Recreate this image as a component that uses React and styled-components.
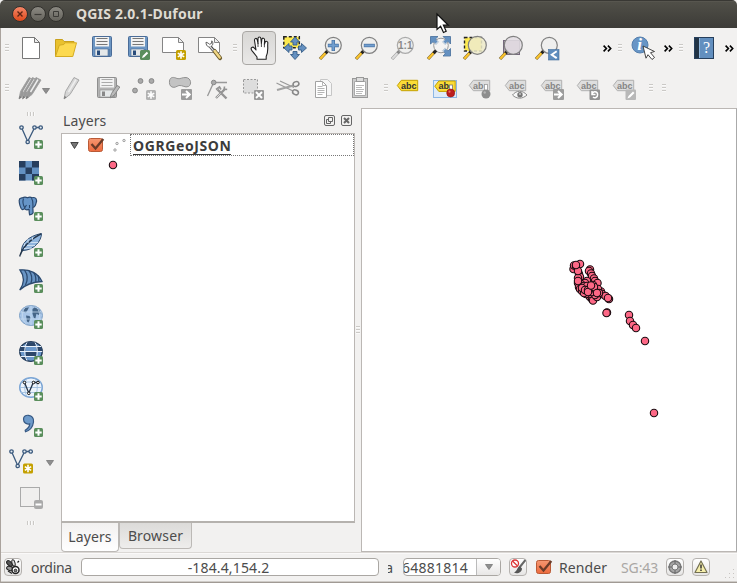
import React from "react";
import styled, { createGlobalStyle, css } from "styled-components";

const GlobalStyle = createGlobalStyle`
  html, body { margin: 0; padding: 0; background: #f2f1f0; }
  * { box-sizing: border-box; }
`;

const Window = styled.div`
  width: 737px;
  height: 583px;
  display: flex;
  flex-direction: column;
  overflow: hidden;
  background: #f2f1f0;
  color: #4c4c4c;
  font: 14px "Noto Sans", sans-serif;
`;

/* ---------- title bar ---------- */
const TitleBar = styled.header`
  position: relative;
  height: 28px;
  flex: none;
  display: flex;
  align-items: center;
  padding-left: 12px;
  border-radius: 5px 5px 0 0;
  background: linear-gradient(#393834 0, #393834 1px, #5f5d56 1px, #504f48 2px, #3c3b37 100%);
`;
const WindowButton = styled.button`
  width: 16px;
  height: 16px;
  margin-right: 2px;
  padding: 0;
  border: 1px solid #32312d;
  border-radius: 50%;
  display: grid;
  place-items: center;
  background: ${(p) => (p.$close ? "linear-gradient(#f58667, #e04a1c)" : "linear-gradient(#8b8982, #65635c)")};
`;
const Title = styled.h1`
  margin: 0 0 0 10px;
  color: #dfdbd2;
  font: bold 14px/28px "Noto Sans", sans-serif;
  letter-spacing: 0.2px;
  white-space: pre;
`;
const Pointer = styled.svg`
  position: absolute;
  left: 436px;
  top: 13px;
  z-index: 2;
  overflow: visible;
`;

/* ---------- shared ---------- */
const Frame = styled.div`
  flex: 1;
  min-height: 0;
  display: flex;
  flex-direction: column;
  border-left: 1px solid #aaa39d;
  border-bottom: 1px solid #a09a94;
  box-shadow: inset 0 -1px #cfccc8;
`;
const IconSvg = styled.svg`
  width: 24px;
  height: 24px;
  flex: none;
  display: block;
  overflow: visible;
`;
const Icon = ({ children }) => (
  <IconSvg viewBox="0 0 24 24" fill="none">{children}</IconSvg>
);

const ToolRow = styled.div`
  height: 40px;
  flex: none;
  display: flex;
  align-items: center;
  margin-left: -1px;
`;
const Cell = styled.div`
  width: ${(p) => p.$w || 36}px;
  height: 36px;
  flex: none;
  display: flex;
  align-items: center;
  justify-content: center;
  ${(p) => p.$start && css`
    justify-content: flex-start;
    padding-left: ${p.$start}px;
    & > svg:last-child { margin-top: 6px; }
  `}
`;
const ActiveTool = styled.div`
  width: 34px;
  height: 34px;
  margin: 0 1px;
  display: grid;
  place-items: center;
  border: 1px solid #aaa8a5;
  border-radius: 4px;
  background: linear-gradient(#d8d7d5, #e9e8e7);
`;
const GripLines = styled.div`
  width: ${(p) => (p.$vertical ? 8 : 4)}px;
  height: ${(p) => (p.$vertical ? 4 : 8)}px;
  background: repeating-linear-gradient(${(p) => (p.$vertical ? "90deg" : "180deg")}, #cbc9c6 0 1px, #fafafa 1px 2px, transparent 2px 3px);
`;
const Grip = ({ w }) => <Cell $w={w}><GripLines /></Cell>;
const Gap = styled.div`
  width: ${(p) => p.$w}px;
  flex: none;
`;
const Chevron = () => (
  <svg width="9" height="7" viewBox="0 0 9 7" fill="none" stroke="#000" strokeWidth="1.6">
    <path d="M.6.6 3.4 3.5.6 6.4M4.9.6 7.7 3.5 4.9 6.4" />
  </svg>
);
const DownArrow = () => (
  <svg width="8" height="6" viewBox="0 0 8 6"><path d="M.5.5h7L4 5.5z" fill="#8f8f8f" stroke="#777" strokeWidth=".8" /></svg>
);

/* ---------- badges ---------- */
const PlusBadge = () => (
  <g>
    <rect x="15" y="15" width="9" height="9" rx="1.5" fill="#5a8e5c" />
    <path d="M19.5 16.3v6.4M16.3 19.5h6.4" stroke="#fff" strokeWidth="2" />
  </g>
);
const StarBadge = ({ color = "#c4a000" }) => (
  <g>
    <rect x="14" y="14" width="10" height="10" rx="1.5" fill={color} />
    <path d="M19 15.3v7.4M15.8 17.1l6.4 3.8M22.2 17.1l-6.4 3.8" stroke="#fff" strokeWidth="1.6" />
  </g>
);
const ArrowBadge = () => (
  <g>
    <rect x="13" y="13" width="11" height="11" rx="1" fill="#9c9c9c" />
    <path d="M14 18.5h7M18 15l3.7 3.5L18 22" stroke="#fff" strokeWidth="2" />
  </g>
);

/* ---------- icons: file ---------- */
const NewFile = () => (
  <Icon>
    <path d="M3.5 1.5h12l5 5v16h-17z" fill="#fff" stroke="#777" />
    <path d="M15.5 1.5v5h5z" fill="#eee" stroke="#777" />
  </Icon>
);
const OpenFile = () => (
  <Icon>
    <path d="M1.5 20.5v-17h7l1.5 2h10v3" fill="#e9c12e" stroke="#c9a11d" />
    <path d="M1.5 20.5 5.3 9.2l4.5-.7 1-1.7h11.7l-3.7 13.7z" fill="#fcd94f" stroke="#d5ac22" />
  </Icon>
);
const Floppy = ({ gray }) => {
  const edge = gray ? "#8f8f8f" : "#4a6c98";
  const body = gray ? "#b3b3b3" : "#6d97c4";
  return (
    <g>
      <rect x="2.5" y=".5" width="19" height="20" rx="1" fill={body} stroke={edge} />
      <rect x="5" y="1" width="14" height="9.5" fill="#f2f2f2" />
      <path d="M6.5 2.5h11M6.5 5.5h11M6.5 8.5h11" stroke={gray ? "#aaa" : "#777"} />
      <rect x="5" y="13" width="13" height="7" fill="#e5e8e9" stroke={edge} strokeWidth=".6" />
      <rect x="7" y="14.5" width="3" height="4.5" fill={gray ? "#888" : "#294c7b"} />
      <path d="M18.3 13h2v7h-2z" fill={edge} opacity=".6" />
    </g>
  );
};
const Save = () => <Icon><Floppy /></Icon>;
const SaveAs = () => (
  <Icon>
    <Floppy />
    <rect x="14" y="14" width="10" height="10" rx="1.5" fill="#5a8e5c" />
    <path d="m16 22 .8-2.2 4-4 1.4 1.4-4 4z" fill="#fff" />
  </Icon>
);
const Sheet = () => (
  <g>
    <path d="M.5 1.5h16l5 5v10H.5z" fill="#fff" stroke="#858585" />
    <path d="M16.5 1.5v5h5z" fill="#eee" stroke="#858585" />
  </g>
);
const NewComposer = () => <Icon><Sheet /><StarBadge /></Icon>;
const ComposerManager = () => (
  <Icon>
    <Sheet />
    <path d="m16.5 15 5.500 7" stroke="#6d5b2a" strokeWidth="4.2" strokeLinecap="round" />
    <path d="m16.7 15 5 6.500" stroke="#f0d684" strokeWidth="2.5" strokeLinecap="round" />
    <path d="m11.5 9.5 4 5" stroke="#444" strokeWidth="3" />
    <path d="M8 6.200c0 5 4 6 6.300 3.100 1-1.500.7-3.300-.5-4.500l-.4 2.700-2 .8-1.200-1.200z" fill="#fff" stroke="#555" strokeWidth=".9" />
    <path d="m11.5 10 4 4.700" stroke="#ddd" strokeWidth="1.2" />
  </Icon>
);

/* ---------- icons: navigation ---------- */
const Hand = () => (
  <Icon>
    <path d="M10 23.300v-2.300L4.700 14.300C3 11.500 5.800 10.200 7.400 12.200L9 14 7.500 4.500C7.300 2 9.700 1.800 10.200 3.700L11 7.500V2.700C11 .5 13.700.5 13.900 2.700L14.400 7.500l.4-4c.3-2 2.900-1.600 2.800.4l-.2 4.300.7-1.900c.8-1.700 3-1 2.700.9-.5 4.200 1 8-1.600 13.300v2.800z" fill="#fff" stroke="#222" strokeWidth="1.1" strokeLinejoin="round" />
    <path d="M11 7v4M14.400 7v4M17.400 7.800v3.500" stroke="#333" strokeWidth=".9" />
  </Icon>
);
const PanSelection = () => (
  <Icon>
    <rect x=".8" y=".8" width="15.5" height="11" fill="#fce94f" stroke="#222" strokeWidth="1.5" strokeDasharray="3 2" />
    <g fill="#6490c0" stroke="#375d88" strokeWidth=".9">
      <path d="m12 1 4.500 5H14v3h-4V6H7.500z" />
      <path d="M12 23.500 7.500 18.500H10v-3h4v3h2.500z" />
      <path d="m1 12 5-4.500V10h3v4H6v2.500z" />
      <path d="m23.500 12-5 4.500V14h-3v-4h3V7.500z" />
    </g>
  </Icon>
);
const Handle = ({ gray }) => (
  <g>
    <path d="m1 23 7-7.500" stroke={gray ? "#999" : "#7d6526"} strokeWidth="3.2" />
    <path d="m1.300 22.700 6-6.400" stroke={gray ? "#ddd" : "#fcc52d"} strokeWidth="2.1" />
    <path d="m6.500 17.200 2.600-2.800" stroke={gray ? "#888" : "#222"} strokeWidth="3" />
  </g>
);
const Lens = ({ r = 8, gray, fill = "#efefee", children }) => (
  <g>
    <Handle gray={gray} />
    <circle cx="14.3" cy="9.3" r={r} fill={fill} stroke={gray ? "#aaa" : "#808080"} strokeWidth="1.2" />
    {children}
  </g>
);
const ZoomIn = () => <Icon><Lens><path d="M14.300 4v11M8.800 9.500h11" stroke="#456fa0" strokeWidth="3.4" /><path d="M14.300 4.500v10M9.300 9.500h10" stroke="#729fcf" strokeWidth="2" /></Lens></Icon>;
const ZoomOut = () => <Icon><Lens><path d="M8.800 9.500h11" stroke="#456fa0" strokeWidth="3.4" /><path d="M9.300 9.500h10" stroke="#729fcf" strokeWidth="2" /></Lens></Icon>;
const ZoomNative = () => (
  <Icon>
    <Lens gray><text x="14.3" y="13" textAnchor="middle" fontFamily="Liberation Sans, sans-serif" fontWeight="bold" fontSize="10" fill="#888">1:1</text></Lens>
  </Icon>
);
const ZoomFull = () => (
  <Icon>
    <g fill="#6490c0" stroke="#456d9b" strokeWidth=".8">
      <path d="M3.500.5h7.500L8.700 2.800l3 3L9 8.700l-3-3L3.500 8z" />
      <path d="M23.500.5V8l-2.300-2.300-3 3-2.800-2.800 3-3L16.100.5z" />
      <path d="M23.500 20H16l2.300-2.300-3-3 2.800-2.800 3 3 2.400-2.400z" />
    </g>
    <circle cx="14" cy="9.5" r="7.3" fill="#f4f4f4aa" stroke="#999" />
    <g fill="#6490c0">
      <path d="M4 1h6L8 3l2.500 2.500-2 2L6 5 4 7z" />
      <path d="M23 1v6l-2-2-2.500 2.500-2-2L19 3l-2-2z" />
      <path d="M23 19.500h-6l2-2-2.500-2.500 2-2 2.500 2.500 2-2z" />
    </g>
    <Handle />
  </Icon>
);
const ZoomSelection = () => (
  <Icon>
    <rect x="1.5" y="1.5" width="17" height="13.5" fill="#fce94f" stroke="#222" strokeWidth="1.4" strokeDasharray="3 2" />
    <Lens r={9} fill="#eeebcbdd" />
  </Icon>
);
const ZoomLayer = () => (
  <Icon>
    <rect x="4.5" y="4.500" width="16" height="14" fill="#b8a9b8" stroke="#75697c" />
    <Lens r={9} fill="#e2dde3e0" />
  </Icon>
);
const ZoomLast = () => (
  <Icon>
    <Lens r={8} />
    <rect x="13.5" y="13.5" width="10.5" height="10.5" fill="#5f8dbd" stroke="#456e9d" strokeWidth=".6" />
    <path d="m21.700 15.300-5 3.400 5 3.400" stroke="#fff" strokeWidth="1.9" />
  </Icon>
);
const Identify = () => (
  <Icon>
    <circle cx="9" cy="9" r="8" fill="#6795c6" stroke="#557fad" />
    <text x="8.5" y="14.3" textAnchor="middle" fontFamily="Liberation Serif, serif" fontStyle="italic" fontWeight="bold" fontSize="17" fill="#fff">i</text>
    <path d="m12 10 11.500 5.500-4 1.200 4 4.800-2.500 2-4-4.800-2 3.500z" fill="#fff" stroke="#333" strokeWidth=".9" />
  </Icon>
);
const HelpBook = () => (
  <Icon>
    <rect x="2.500" y="1.500" width="19" height="21" fill="#628fbf" stroke="#263f5c" />
    <path d="M3 2h4v20H3z" fill="#213345" />
    <path d="M7.500 2v20" stroke="#8fb6dc" />
    <text x="14.5" y="17" textAnchor="middle" fontFamily="Liberation Serif, serif" fontSize="16" fill="#fff">?</text>
  </Icon>
);

/* ---------- icons: editing ---------- */
const PencilShape = ({ x = 0, shade = "#c8c8c8" }) => (
  <g transform={`translate(${x} 0)`}>
    <path d="m4 23 1.500-7.500L14 1.500l5 2.500-9 14.500z" fill={shade} stroke="#a0a0a0" strokeWidth=".9" />
    <path d="m8.500 16 7.500-12.500" stroke="#eee" strokeWidth="1.5" />
    <path d="m4 23 .6-3 2 1.200z" fill="#777" />
  </g>
);
const Edits = () => <Icon><PencilShape x={-3} shade="#999" /><PencilShape x={0.5} shade="#999" /><PencilShape x={4} shade="#999" /></Icon>;
const Pencil = () => <Icon><PencilShape shade="#d6d6d6" /></Icon>;
const SaveEdits = () => (
  <Icon>
    <g transform="translate(-1 1)"><Floppy gray /></g>
    <path d="m14 22 1.500-4.500L21 9.500l2.800 1.500-5.500 8z" fill="#bbb" stroke="#888" />
  </Icon>
);
const AddFeature = () => (
  <Icon>
    <g fill="#aaa" stroke="#888"><circle cx="8.500" cy="5" r="2.400" /><circle cx="19.500" cy="5" r="2.400" /><circle cx="3" cy="14.500" r="2.400" /></g>
    <StarBadge color="#b2b2b2" />
  </Icon>
);
const MoveFeature = () => (
  <Icon>
    <path d="M1.500 5C2 .5 6 1 9 2.500c3 1 5-1.300 9-1 5 .5 6 7 2.500 9-3.500 1.500-6-1.500-9.500-1-3 1-4 2.500-7 1.500C1.500 10 1.300 7 1.500 5z" fill="#c3c3c3" stroke="#929292" />
    <ArrowBadge />
  </Icon>
);
const NodeTool = () => (
  <Icon>
    <path d="M3.500 20 9.700 6.500H23" stroke="#999" strokeWidth="1.3" />
    <circle cx="9.700" cy="6.500" r="2.300" fill="#aaa" stroke="#888" />
    <path d="m12 22 9-9M13.500 13.500l9 9" stroke="#949494" strokeWidth="2.4" />
    <path d="m12 13.500 3.500-2.500 1.500 2.500M20.500 10.500l-.3 2.500 3 .5" stroke="#949494" strokeWidth="1.6" />
    <path d="m12.500 21.500 4-4" stroke="#ddd" />
  </Icon>
);
const DeleteSelected = () => (
  <Icon>
    <rect x="3.500" y="3.500" width="14" height="13.500" fill="#ddd" stroke="#999" strokeDasharray="2 1.500" />
    <rect x="14" y="14" width="10" height="10" fill="#999" rx="1" />
    <path d="m16 16 6 6M22 16l-6 6" stroke="#fff" strokeWidth="1.9" />
  </Icon>
);
const Cut = () => (
  <Icon>
    <path d="m.5 7 16.500 8M4 5l14 6.500" stroke="#9a9a9a" strokeWidth="1.300" />
    <path d="m1 14 16.500-4.500" stroke="#a2a2a2" strokeWidth="1.900" />
    <ellipse cx="20" cy="8" rx="3" ry="2.300" stroke="#888" strokeWidth="1.500" transform="rotate(-25 20 8)" />
    <ellipse cx="19.500" cy="16.300" rx="3" ry="2.300" stroke="#888" strokeWidth="1.500" transform="rotate(25 19.500 16.300)" />
  </Icon>
);
const Copy = () => (
  <Icon>
    <path d="M8.500 3.500h7l4 4v12h-11z" fill="#f6f6f6" stroke="#c6c6c6" />
    <path d="M3.500 5.500h7l4 4v12h-11z" fill="#fff" stroke="#a2a2a2" />
    <path d="M10.500 5.500v4h4M5.500 10.500h5M5.500 12.500h7M5.500 14.500h7M5.500 16.500h7M5.500 18.500h5" stroke="#b5b5b5" />
  </Icon>
);
const Paste = () => (
  <Icon>
    <rect x="4.500" y="2.500" width="15" height="19" fill="#ccc" stroke="#999" />
    <path d="M6.500 5.500h11v14h-11z" fill="#fff" stroke="#aaa" />
    <rect x="8.500" y="1.500" width="7" height="4" fill="#ddd" stroke="#999" />
    <path d="M8 9.500h8M8 11.500h6M8 13.500h8M8 15.500h7M8 17.500h6" stroke="#bbb" />
  </Icon>
);

/* ---------- icons: labelling ---------- */
const LabelTag = ({ yellow, text = "abc" }) => (
  <g>
    <path d="m1.300 9.500 4-5.200h16.400v10.400H5.300z" fill={yellow ? "#fbdc36" : "#dedede"} stroke={yellow ? "#c4a000" : "#b0b0b0"} />
    <text x="5" y="12.500" fontFamily="Liberation Sans, sans-serif" fontWeight="bold" fontSize="9" fill={yellow ? "#333" : "#858585"}>{text}</text>
  </g>
);
const LabelMain = () => <Icon><LabelTag yellow /></Icon>;
const LabelPinned = () => (
  <Icon>
    <rect x="1.500" y="4.500" width="23" height="17" fill="#dfebf8" stroke="#8db7e5" />
    <g transform="translate(1.500 .7)"><LabelTag yellow text="ab" /></g>
    <rect x="17.500" y="9" width="3" height="8" fill="#fff" stroke="#777" strokeWidth=".8" />
    <circle cx="18.700" cy="17" r="4" fill="#bd1e20" stroke="#901010" strokeWidth=".6" />
    <circle cx="17.500" cy="15.700" r="1.100" fill="#e86b64" />
  </Icon>
);
const LabelPin = () => (
  <Icon>
    <LabelTag text="ab" />
    <rect x="16.500" y="8.500" width="3" height="8" fill="#fff" stroke="#999" strokeWidth=".8" />
    <circle cx="18" cy="18" r="4.500" fill="#8d8d8d" />
    <circle cx="16.700" cy="16.500" r="1.200" fill="#b5b5b5" />
  </Icon>
);
const LabelShow = () => (
  <Icon>
    <LabelTag />
    <path d="M8.500 19c4-5 10-5 14.500 0-4.500 4.200-10.500 4.200-14.500 0z" fill="#f8f8f8" stroke="#888" />
    <circle cx="16" cy="18.700" r="2.700" fill="#777" />
    <circle cx="16" cy="18" r=".8" fill="#fff" />
  </Icon>
);
const LabelMove = () => <Icon><LabelTag /><ArrowBadge /></Icon>;
const LabelRotate = () => (
  <Icon>
    <LabelTag />
    <rect x="13.500" y="13.500" width="10.500" height="10.500" rx="1" fill="#929292" />
    <path d="M16 15v3.500h3.500M16.300 18c0-3 5.300-3 5.300.7 0 3-3 3.600-4.600 2.300" stroke="#fff" strokeWidth="1.500" />
  </Icon>
);
const LabelChange = () => (
  <Icon>
    <LabelTag />
    <rect x="13.500" y="13.500" width="10.500" height="10.500" rx="1" fill="#b8b8b8" />
    <path d="m15.500 22.500 1-2.500 4.500-4.500 1.500 1.500-4.500 4.500z" fill="#fff" />
  </Icon>
);

/* ---------- icons: layer sources ---------- */
const VectorV = () => (
  <g stroke="#3d5b7e" strokeWidth="1.300">
    <path d="m2.500 2.500 6.200 14 7-14h6" />
    <g fill="#e8eef5"><circle cx="2.500" cy="2.500" r="1.700" /><circle cx="8.700" cy="17" r="1.700" /><circle cx="15.500" cy="2.500" r="1.700" /><circle cx="21.700" cy="2.500" r="1.700" /></g>
  </g>
);
const AddVector = () => <Icon><VectorV /><PlusBadge /></Icon>;
const AddRaster = () => (
  <Icon>
    <path d="M0 0h20v19.500H0z" fill="#6391c2" />
    <path d="M0 0h6.500v6.500H0zM13 0h7v6.500h-7zM6.500 6.500H13V13H6.500zM0 13h6.500v6.500H0zM13 13h7v6.500h-7z" fill="#263e5e" />
    <PlusBadge />
  </Icon>
);
const AddPostgis = () => (
  <Icon>
    <path d="M3.500.8c2-1 4-.5 5 0 2-1 4-.3 4.500 0 4-1.300 5.500 2 4 5.500-.8 3-1.800 4-3.200 4l.3 5.500c-1 2.500-2.500 1.500-3.500 2-.6-2-.3-4-.6-5.500-1.600.8-3.200.9-4.500-.7-1.200 1-2.400 1.500-3.200.2C.5 8.500-.5 3 .7 1.800c1-.8 1.900-.8 2.800-1z" fill="#6695c8" stroke="#29476d" strokeWidth="1.200" />
    <path d="M4.500 1.500c-1 3-.8 6 1.300 9.300L7.500 8M12.500 1.200c1.800 2.500 1.200 5 1.500 8.500M10.500 11V8" stroke="#29476d" strokeWidth="1.100" />
    <PlusBadge />
  </Icon>
);
const AddSpatialite = () => (
  <Icon>
    <path d="M2.500 18.500C2 11 9 3 22.500.5 22.500 8 15 17 4 17.500z" fill="#8fb5de" stroke="#2d4c70" />
    <path d="M.7 23.500C3 15 10 7 22 .8" stroke="#25374d" strokeWidth="1.400" />
    <path d="m5 15.500 8-.5M8 12.500h8M11.500 9.500h7.500M5 13l1-3M9 10V6M13 7l1-3" stroke="#ccdef1" />
    <PlusBadge />
  </Icon>
);
const AddMssql = () => (
  <Icon>
    <path d="M1 1c9-1 18 3 22 11.500C13 13 7 15 .7 21 5.500 14 5.500 7 1 1z" fill="#6995c5" stroke="#2b4a70" strokeWidth="1.300" />
    <path d="M5.500 1c3.500 5 3.500 10 1 15M10 1.700c3 4 3.500 8 2 12.300M14.700 3.500c2 3 2.500 6 2 9.300M19 6.500c1 2 1.200 4 .8 6" stroke="#2b4a70" strokeWidth="1.300" />
    <PlusBadge />
  </Icon>
);
const AddWms = () => (
  <Icon>
    <ellipse cx="12" cy="10.500" rx="11.500" ry="10" fill="#a9c6e7" stroke="#7c9fc5" />
    <path d="M3 6.500 6 3l4-.7-1.500 3L7 7.500l-2.500-.7zM7 10.500l3.500.5 1.200 2-2.200 4.500-1.500-1zM13.500 4l2-1.500 4.500 1.700 1.700 3.800-2.200 2-2-1.200-1.200 5-1.500-1-1.300-4z" fill="#456587" />
    <path d="M1 7h22M1 14h22M12 .5v20M6 2.500c-4 5-3 13 1 16M18 2.500c4 5 3 13-1 16" stroke="#c4d9ef" strokeWidth=".8" />
    <PlusBadge />
  </Icon>
);
const AddWcs = () => (
  <Icon>
    <ellipse cx="12" cy="10.500" rx="11.300" ry="9.800" fill="#6b98cb" stroke="#243b58" strokeWidth="1.300" />
    <path d="M8 1.200h8L17.500 5H6.500zM1 6h5.500v4.500H1zM17.500 6H23v4.500h-5.500zM6.500 11h11v4.500h-11zM3 16h4l1 4c-3-1-4-2-5-4z" fill="#2c476a" />
    <path d="M2 5.500h20M.8 10.500h22.500M2 15.500h20M8 1.500c-3 5-3 13 0 18M16 1.500c3 5 3 13 0 18" stroke="#e9f2fc" />
    <PlusBadge />
  </Icon>
);
const AddWfs = () => (
  <Icon>
    <ellipse cx="12" cy="10.500" rx="11.300" ry="9.800" fill="#edf4fc" stroke="#78a3d4" strokeWidth="1.400" />
    <path d="M2 5h20M.8 10.500h22.500M2 15.500h20M8 1.500c-3 5-3 13 0 18M16 1.500c3 5 3 13 0 18" stroke="#a0bfdf" strokeWidth=".9" />
    <path d="m5.500 5.500 4.300 10.500 4.500-10.500H19" stroke="#25364b" strokeWidth="1.300" />
    <g fill="#fff" stroke="#111"><circle cx="5.500" cy="5.500" r="1.300" /><circle cx="9.800" cy="16.300" r="1.300" /><circle cx="14.500" cy="5.500" r="1.300" /><circle cx="19" cy="5.500" r="1.300" /></g>
    <PlusBadge />
  </Icon>
);
const AddDelimited = () => (
  <Icon>
    <path d="M4.500 6c0-3 2.500-4 5-3.700 3.500.4 5.500 3 5 6.700-.6 5-4 8.500-8 9.700l-.3-1.400c2.700-1.700 4.600-4.200 4.500-6.500-3.500 1-6.200-1.300-6.200-4.800z" fill="#6d9aca" stroke="#365883" strokeWidth="1.200" />
    <PlusBadge />
  </Icon>
);
const NewVector = () => <Icon><VectorV /><g transform="translate(0 .5)"><StarBadge /></g></Icon>;
const RemoveLayer = () => (
  <Icon>
    <rect x="1.500" y="2.500" width="19" height="19" fill="#f0efee" stroke="#aaa" />
    <rect x="15" y="15" width="9" height="9" rx="2" fill="#aaa" />
    <path d="M16.500 19.500h6" stroke="#fff" strokeWidth="2" />
  </Icon>
);

/* ---------- workspace ---------- */
const Workspace = styled.main`
  height: 444px;
  flex: none;
  display: flex;
`;
const SideBar = styled.aside`
  width: 60px;
  display: flex;
  flex-direction: column;
  align-items: center;
  padding-top: 4px;
`;
const SideTools = styled.div`
  display: flex;
  flex-direction: column;
  gap: 12px;
  margin: 9px 0 12px;
`;
const SideTool = styled.div`
  height: 24px;
  display: flex;
  align-items: center;
  ${(p) => p.$menu && css`width: 24px; margin-left: -10px; gap: 13px; & > svg:last-child { flex: none; margin-top: 3px; }`}
`;
const Panel = styled.section`
  width: 294px;
  display: flex;
  flex-direction: column;
`;
const PanelTitle = styled.div`
  height: 25px;
  flex: none;
  display: flex;
  align-items: center;
  gap: 6px;
  padding: 0 3px 0 2px;
  font-size: 14px;
  letter-spacing: 0.1px;
`;
const PanelName = styled.span`
  flex: 1;
`;
const LayerList = styled.div`
  height: 390px;
  border: 1px solid #bbb7b4;
  border-bottom: 2px solid #b5b2ae;
  background: #fff;
`;
const LayerRow = styled.div`
  height: 22px;
  display: flex;
  align-items: center;
  padding-left: 8px;
`;
const LayerName = styled.div`
  flex: 1;
  height: 22px;
  margin-left: 4px;
  padding-left: 2px;
  border: 1px dotted #777;
  color: #3c3c3c;
  font: bold 14px/21px "Noto Sans", sans-serif;
`;
const LayerLabel = styled.span`
  display: inline-block;
  height: 20px;
  letter-spacing: 0.6px;
  border-bottom: 1px solid #3c3c3c;
`;
const SymbolRow = styled.div`
  padding: 4px 0 0 46px;
  line-height: 0;
`;
const Tabs = styled.div`
  display: flex;
  align-items: flex-start;
`;
const Tab = styled.div`
  width: ${(p) => p.$w}px;
  height: ${(p) => (p.$active ? 29 : 26)}px;
  text-align: center;
  line-height: ${(p) => (p.$active ? 28 : 26)}px;
  letter-spacing: ${(p) => (p.$active ? 0.1 : 0.15)}px;
  border: 1px solid #bcb9b6;
  border-top: 0;
  border-radius: 0 0 4px 4px;
  background: ${(p) => (p.$active ? "linear-gradient(#f2f1f0, #fff)" : "linear-gradient(#dcdbd9, #eeedec)")};
`;
const Splitter = styled.div`
  width: 6px;
  display: grid;
  place-items: center;
`;
const MapCanvas = styled.div`
  flex: 1;
  border: 1px solid #bbb7b4;
  border-right-color: #aaa;
  background: #fff;
  line-height: 0;
`;

const CheckSvg = () => (
  <svg width="18" height="18" viewBox="0 0 18 18" fill="none">
    <defs><linearGradient id="check-fill" x2="0" y2="1"><stop stopColor="#f59771" /><stop offset="1" stopColor="#ed6a3d" /></linearGradient></defs>
    <rect x="1.500" y="2.500" width="14" height="13" rx="2" fill="url(#check-fill)" stroke="#b95a36" />
    <path d="m4.500 8 4 4.500 7.800-9.500" stroke="#6a3b28" strokeWidth="2.300" />
  </svg>
);
const Dot = ({ cx, cy }) => <circle cx={cx} cy={cy} r="3.700" fill="#fd6886" stroke="#1a0c10" strokeWidth="1.100" />;

const points = [
  [573.5, 269], [574, 265.500], [576, 266], [580, 264], [579, 274], [580, 277], [578, 278], [590, 269.500], [589, 271], [591, 273.500], [592, 276],
  [594, 278.500], [595, 281], [597.500, 283], [593, 285], [587, 281], [585, 283], [581, 284], [578, 283], [579, 287], [580, 289], [582, 291],
  [584, 286], [587, 286], [590, 297], [592, 299], [593, 300.500], [601, 291.500], [602, 294], [605.500, 296], [609, 299], [608, 298], [597, 297], [595, 295],
  [589, 294], [586, 294], [584, 293], [582, 288], [585, 290], [588, 290], [592, 292], [595, 289], [598, 289], [594, 287], [599, 293],
  [597, 293], [588, 292], [591, 285.500], [578, 281], [578, 271], [576, 265],
  [607, 312.500], [606.500, 313], [629, 315], [630, 321], [633, 325], [636, 328], [645, 341], [654, 413],
];

/* ---------- status bar ---------- */
const StatusBar = styled.footer`
  flex: 1;
  display: flex;
  align-items: center;
  padding: 0 0 1px 3px;
  border-top: 1px solid #dbd8d5;
  box-shadow: inset 0 1px #faf9f9;
`;
const StatusButton = styled.div`
  width: 18px;
  height: 18px;
  flex: none;
  display: grid;
  place-items: center;
  border: 1px solid #b5b2af;
  border-radius: 4px;
  background: linear-gradient(#fff, #e6e5e4);
`;
const StatusText = styled.span`
  width: ${(p) => p.$w}px;
  margin-left: ${(p) => p.$ml}px;
  flex: none;
  white-space: nowrap;
  color: ${(p) => (p.$muted ? "#aaa7a4" : "#4c4c4c")};
  letter-spacing: ${(p) => p.$ls || 0}px;
`;
const TrimmedText = styled.span`
  width: 5px;
  margin-left: 9px;
  flex: none;
  display: flex;
  justify-content: flex-end;
  overflow: hidden;
`;
const Coordinate = styled.div`
  width: 298px;
  height: 18px;
  margin-left: 10px;
  flex: none;
  padding-right: 3px;
  border: 1px solid #aaa7a3;
  border-radius: 4px;
  background: #fff;
  text-align: center;
  line-height: 17px;
  letter-spacing: 0.15px;
`;
const ScaleBox = styled.div`
  width: 98px;
  height: 18px;
  margin-left: 10px;
  flex: none;
  display: flex;
  overflow: hidden;
  border: 1px solid #aaa7a3;
  border-radius: 4px;
  background: #fff;
  line-height: 17px;
`;
const ScaleValue = styled.div`
  width: 64px;
  margin: 0 8px 0 0;
  display: flex;
  justify-content: flex-end;
  overflow: hidden;
  letter-spacing: 0.25px;
`;
const ScaleDrop = styled.div`
  flex: 1;
  display: grid;
  place-items: center;
  border-left: 1px solid #bbb;
  background: linear-gradient(#fff, #e8e7e6);
`;
const Resize = styled.svg`
  margin: 0 0 2px 15px;
  align-self: flex-end;
`;

export default function App() {
  return (
    <Window>
      <GlobalStyle />
      <TitleBar>
        <WindowButton $close><svg width="8" height="8" viewBox="0 0 8 8" stroke="#5d2413" strokeWidth="1.400"><path d="m1.500 1.500 5 5M6.500 1.500l-5 5" /></svg></WindowButton>
        <WindowButton><svg width="8" height="8" viewBox="0 0 8 8" stroke="#3c3b37" strokeWidth="1.200"><path d="M.5 4.500h7" /></svg></WindowButton>
        <WindowButton><svg width="8" height="8" viewBox="0 0 8 8" fill="none" stroke="#3c3b37"><path d="M1.500 1.500h5v5h-5z" /></svg></WindowButton>
        <Title>QGIS 2.0.1-Dufour</Title>
        <Pointer width="14" height="21" viewBox="0 0 14 21"><path d="M1 1v15.500l3.600-3.300 2.900 6.300 2.700-1.300-2.800-6h4.900z" fill="#fff" stroke="#111" strokeWidth="1.200" /></Pointer>
      </TitleBar>

      <Frame>
        <ToolRow>
          <Grip w={14} />
          <Gap $w={-2} />
          {[NewFile, OpenFile, Save, SaveAs, NewComposer, ComposerManager].map((I, i) => <Cell key={i} $w={i === 0 ? 34 : 36}><I /></Cell>)}
          <Grip w={13} />
          <ActiveTool><Hand /></ActiveTool>
          {[PanSelection, ZoomIn, ZoomOut, ZoomNative, ZoomFull, ZoomSelection, ZoomLayer, ZoomLast].map((I, i) => <Cell key={i}><I /></Cell>)}
          <Gap $w={37} />
          <Cell $w={10}><Chevron /></Cell>
          <Grip w={16} />
          <Cell $w={30}><Identify /></Cell>
          <Gap $w={5} />
          <Cell $w={10}><Chevron /></Cell>
          <Grip w={16} />
          <Cell $w={30}><HelpBook /></Cell>
          <Gap $w={5} />
          <Cell $w={10}><Chevron /></Cell>
        </ToolRow>
        <ToolRow>
          <Grip w={14} />
          <Cell $w={40} $start={4}><Edits /><DownArrow /></Cell>
          {[Pencil, SaveEdits, AddFeature, MoveFeature, NodeTool, DeleteSelected, Cut, Copy, Paste].map((I, i) => <Cell key={i}><I /></Cell>)}
          <Gap $w={4} />
          <Grip w={8} />
          {[LabelMain, LabelPinned, LabelPin, LabelShow, LabelMove, LabelRotate, LabelChange].map((I, i) => <Cell key={i}><I /></Cell>)}
          <Grip w={18} />
          <Grip w={8} />
        </ToolRow>

        <Workspace>
          <SideBar>
            <GripLines $vertical />
            <SideTools>
              {[AddVector, AddRaster, AddPostgis, AddSpatialite, AddMssql, AddWms, AddWcs, AddWfs, AddDelimited].map((I, i) => <SideTool key={i}><I /></SideTool>)}
              <SideTool $menu><NewVector /><DownArrow /></SideTool>
              <SideTool><RemoveLayer /></SideTool>
            </SideTools>
            <GripLines $vertical />
          </SideBar>

          <Panel>
            <PanelTitle>
              <PanelName>Layers</PanelName>
              <svg width="11" height="11" viewBox="0 0 11 11" fill="none" stroke="#666"><rect x=".5" y=".5" width="10" height="10" rx="1.500" /><path d="M4.500 2.500h4v4h-4zM4.500 4.500h-2v4h4v-2" /></svg>
              <svg width="11" height="11" viewBox="0 0 11 11" fill="none" stroke="#666"><rect x=".5" y=".5" width="10" height="10" rx="1.500" /><path d="m3 3 5 5M8 3 3 8" strokeWidth="2" /></svg>
            </PanelTitle>
            <LayerList>
              <LayerRow>
                <svg width="9" height="7" viewBox="0 0 9 7"><path d="M.8.5h7.400L4.500 6.500z" fill="#777" stroke="#444" /></svg>
                <Gap $w={8} />
                <CheckSvg />
                <Gap $w={7} />
                <svg width="14" height="14" viewBox="0 0 14 14" fill="#eee" stroke="#999" strokeWidth=".9"><circle cx="12" cy="2.500" r="1.200" /><circle cx="5" cy="5.500" r="1.200" /><circle cx="3" cy="12" r="1.200" /></svg>
                <LayerName><LayerLabel>OGRGeoJSON</LayerLabel></LayerName>
              </LayerRow>
              <SymbolRow><svg width="10" height="10" viewBox="0 0 10 10"><Dot cx={5} cy={5} /></svg></SymbolRow>
            </LayerList>
            <Tabs>
              <Tab $active $w={58}>Layers</Tab>
              <Tab $w={73}>Browser</Tab>
            </Tabs>
          </Panel>

          <Splitter><GripLines /></Splitter>

          <MapCanvas>
            <svg width="373" height="442" viewBox="362 109 373 442">
              {points.map(([x, y], i) => <Dot key={i} cx={x} cy={y} />)}
            </svg>
          </MapCanvas>
        </Workspace>

        <StatusBar>
          <StatusButton>
            <svg width="16" height="16" viewBox="0 0 16 16" fill="none" stroke="#222"><ellipse cx="4.500" cy="4.500" rx="2" ry="3.500" transform="rotate(-45 4.500 4.500)" fill="#555" /><ellipse cx="8.500" cy="4" rx="1.500" ry="3.300" transform="rotate(-15 8.500 4)" fill="#ddd" /><ellipse cx="5" cy="9.500" rx="3.500" ry="2" transform="rotate(15 5 9.500)" fill="#999" /><circle cx="10.500" cy="11" r="3.500" fill="#fff" strokeWidth="1.500" /><circle cx="10.500" cy="11.500" r="1.300" fill="#888" /><path d="m3 12 4 2.500M12.500 3.500l1.500-1.500" strokeWidth="1.300" /></svg>
          </StatusButton>
          <StatusText $w={40} $ml={9} $ls={-0.3}>ordina</StatusText>
          <Coordinate>-184.4,154.2</Coordinate>
          <TrimmedText>a</TrimmedText>
          <ScaleBox><ScaleValue>64881814</ScaleValue><ScaleDrop><DownArrow /></ScaleDrop></ScaleBox>
          <Gap $w={8} />
          <StatusButton>
            <svg width="16" height="16" viewBox="0 0 16 16" fill="none"><path d="M15.500 1 9 9" stroke="#666" strokeWidth="2" /><path d="M10 7.500c-3 0-2 4-6 6 3 2 8 0 8-4z" fill="#555" /><circle cx="5" cy="4.500" r="3.500" stroke="#db3434" strokeWidth="1.300" fill="#fff" /><path d="m2.500 2 5 5" stroke="#db3434" strokeWidth="1.300" /></svg>
          </StatusButton>
          <Gap $w={8} />
          <CheckSvg />
          <StatusText $w={54} $ml={6} $ls={0.1}>Render</StatusText>
          <StatusText $w={36} $ml={8} $ls={-0.1} $muted>SG:43</StatusText>
          <Gap $w={9} />
          <StatusButton>
            <svg width="16" height="16" viewBox="0 0 16 16" fill="none" stroke="#777"><circle cx="8" cy="8" r="6" fill="#a5a5a5" strokeWidth="1.300" /><path d="M8 1v14M1 8h14" stroke="#666" /><circle cx="8" cy="8" r="3" fill="#eee" stroke="#777" /></svg>
          </StatusButton>
          <Gap $w={8} />
          <StatusButton>
            <svg width="14" height="14" viewBox="0 0 14 14"><path d="m7 1 6 11.500H1z" fill="#f6efab" stroke="#737052" strokeWidth="1.200" strokeLinejoin="round" /><path d="M7 4.500v4M7 9.500v1.600" stroke="#333" strokeWidth="1.500" /></svg>
          </StatusButton>
          <Resize width="10" height="10" viewBox="0 0 10 10" fill="#c8c5c2"><path d="M8 0h1v1H8zM8 4h1v1H8zM4 4h1v1H4zM8 8h1v1H8zM4 8h1v1H4zM0 8h1v1H0z" /></Resize>
        </StatusBar>
      </Frame>
    </Window>
  );
}
